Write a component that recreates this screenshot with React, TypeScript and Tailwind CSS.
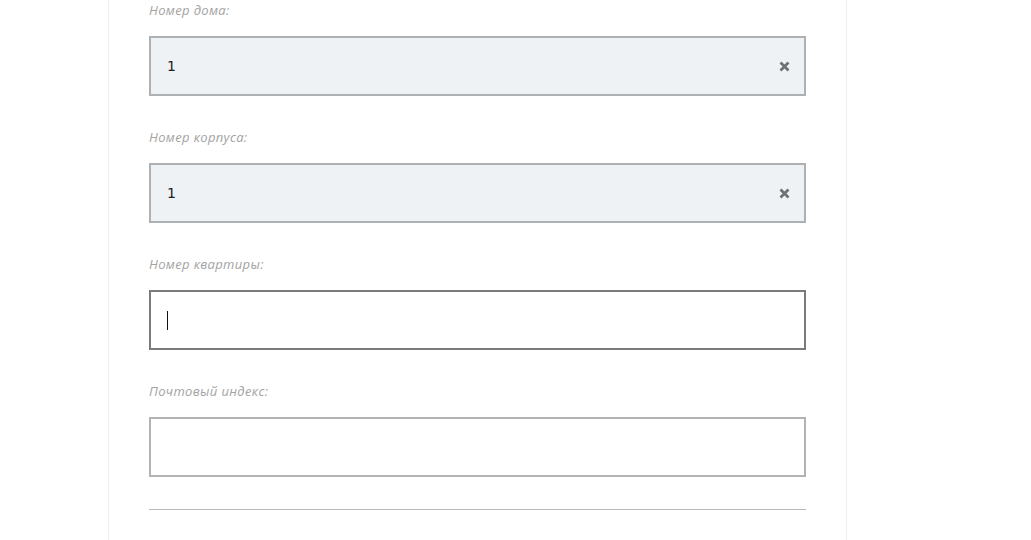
import React from 'react';

const labelCls = "block h-[18px] leading-[18px] text-[13px] tracking-[0.35px] italic text-[#a3a3a3] mb-[17px] font-['Open_Sans',sans-serif]";

function ClearIcon() {
  return (
    <svg width="11" height="11" viewBox="0 0 11 11" className="shrink-0">
      <path d="M1.5 1.5 L9.5 9.5 M9.5 1.5 L1.5 9.5" stroke="#6f7275" strokeWidth="2.8" strokeLinecap="butt" />
    </svg>
  );
}

function Field({ label, value, focused, filled }: { label: string; value?: string; focused?: boolean; filled?: boolean }) {
  const box = filled
    ? 'bg-[#eef2f5] border-[#adb1b4]'
    : focused
      ? 'bg-white border-[#7b7b7b]'
      : 'bg-white border-[#b3b3b3]';
  return (
    <div className="mb-[32px]">
      <label className={labelCls}>{label}</label>
      <div className={`h-[60px] border-2 ${box} flex items-center pl-[16px] pr-[14px]`}>
        <span className="flex-1 text-[14px] text-[#222] font-['DejaVu_Sans',sans-serif]">
          {value}
          {focused && <span className="inline-block w-px h-[19px] bg-[#111] align-middle" />}
        </span>
        {filled && <ClearIcon />}
      </div>
    </div>
  );
}

export default function App() {
  return (
    <div className="w-[1031px] h-[540px] bg-white overflow-hidden">
      <div className="ml-[108px] w-[739px] h-full border-x border-[#efefef] px-[40px] pt-[1px]">
        <Field label="Номер дома:" value="1" filled />
        <Field label="Номер корпуса:" value="1" filled />
        <Field label="Номер квартиры:" focused />
        <Field label="Почтовый индекс:" />
        <div className="h-px bg-[#b9b9b9]" />
      </div>
    </div>
  );
}
